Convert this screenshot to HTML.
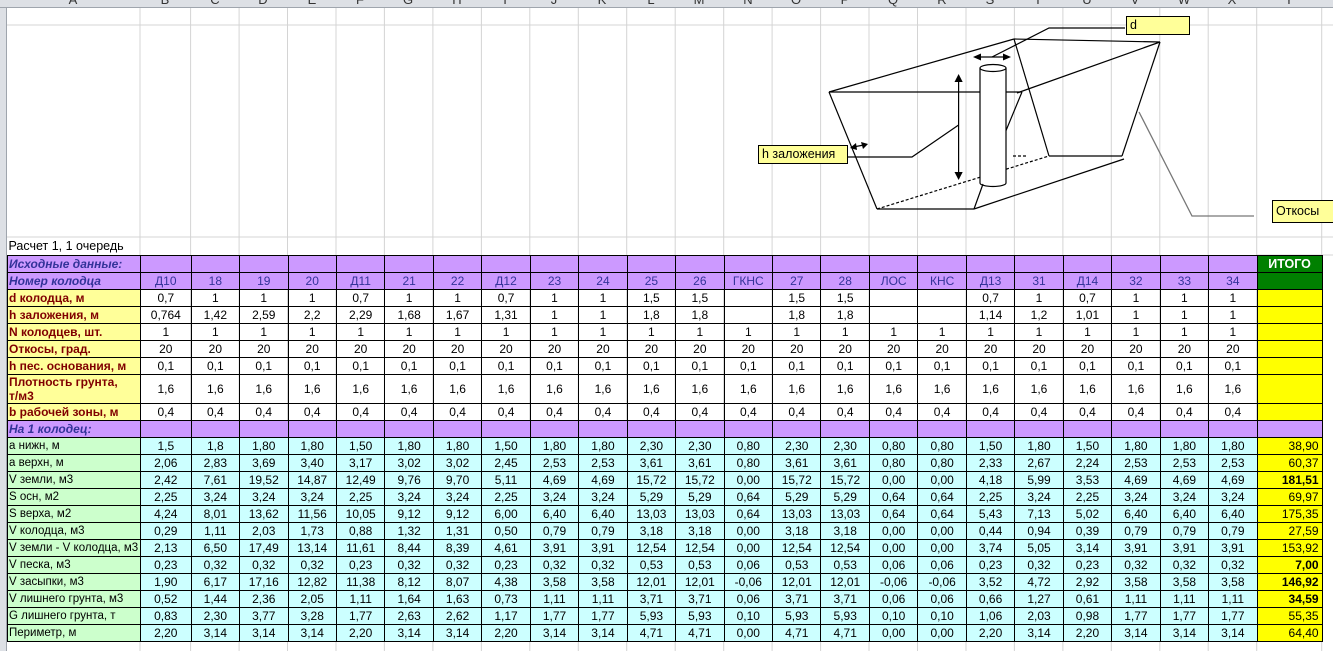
<!DOCTYPE html>
<html><head><meta charset="utf-8"><style>
*{margin:0;padding:0;box-sizing:border-box}
body{width:1333px;height:651px;overflow:hidden;background:#fff;position:relative;font-family:"Liberation Sans","DejaVu Sans",sans-serif}
#hdr{position:absolute;left:0;top:0;width:1333px;height:8px;background:#dde0e5;border-bottom:1px solid #9fa5ad;overflow:hidden}
#hdr span{position:absolute;top:-8px;font-size:13px;color:#333;transform:translateX(-50%)}
#rh{position:absolute;left:0;top:8px;width:7px;height:643px;background:#dde0e5;border-right:1px solid #9fa5ad}
#grid{position:absolute;left:0;top:0}
table{position:absolute;left:7px;top:237px;border-collapse:collapse;table-layout:fixed;width:1314.7px;font-size:12px}
td{border:1px solid #000;padding:0 1px;text-align:center;white-space:nowrap;overflow:hidden;height:17px;line-height:14px;color:#000}
tr.top td{border:none;height:18px;text-align:left;font-size:12.5px;padding-left:1px}
td.l{background:#ffff99;color:#800000;font-weight:bold;text-align:left;font-size:12px}
td.g{background:#ccffcc;text-align:left;font-size:11.5px}
tr.p td{background:#cc99ff;color:#333399}
tr.p td.h{font-weight:bold;font-style:italic;text-align:left}
td.itg{background:#008000 !important;color:#fff !important;font-weight:bold;font-size:12.5px}
td.y{background:#ffff00;text-align:right;padding-right:3px}
tr.c td{background:#ccffff}
tr.c td.g{background:#ccffcc}
tr.c td.y{background:#ffff00}
td.b{font-weight:bold}
.box{position:absolute;background:#ffff99;border:1px solid #000;font-size:12.5px;padding-left:3px;line-height:17px}
</style></head><body>
<svg id="grid" width="1333" height="651">
<g stroke="#d4d4d4" stroke-width="1">
<line x1="140" y1="8" x2="140" y2="651"/><line x1="190.6" y1="8" x2="190.6" y2="651"/><line x1="239.1" y1="8" x2="239.1" y2="651"/><line x1="287.5" y1="8" x2="287.5" y2="651"/><line x1="336" y1="8" x2="336" y2="651"/><line x1="384.4" y1="8" x2="384.4" y2="651"/><line x1="432.9" y1="8" x2="432.9" y2="651"/><line x1="481.4" y1="8" x2="481.4" y2="651"/><line x1="529.8" y1="8" x2="529.8" y2="651"/><line x1="578.3" y1="8" x2="578.3" y2="651"/><line x1="626.7" y1="8" x2="626.7" y2="651"/><line x1="675.2" y1="8" x2="675.2" y2="651"/><line x1="723.7" y1="8" x2="723.7" y2="651"/><line x1="772.1" y1="8" x2="772.1" y2="651"/><line x1="820.6" y1="8" x2="820.6" y2="651"/><line x1="869" y1="8" x2="869" y2="651"/><line x1="917.5" y1="8" x2="917.5" y2="651"/><line x1="966" y1="8" x2="966" y2="651"/><line x1="1014.4" y1="8" x2="1014.4" y2="651"/><line x1="1062.9" y1="8" x2="1062.9" y2="651"/><line x1="1111.3" y1="8" x2="1111.3" y2="651"/><line x1="1159.8" y1="8" x2="1159.8" y2="651"/><line x1="1208.2" y1="8" x2="1208.2" y2="651"/><line x1="1256.7" y1="8" x2="1256.7" y2="651"/><line x1="1321.7" y1="8" x2="1321.7" y2="651"/>
<line x1="7" y1="25" x2="1333" y2="25"/><line x1="7" y1="237" x2="1333" y2="237"/><line x1="1256" y1="255" x2="1333" y2="255"/>
</g>
<g stroke="#9fa5ad"><line x1="0" y1="25" x2="7" y2="25"/><line x1="0" y1="237" x2="7" y2="237"/></g>
</svg>
<div id="hdr">
<span style="left:73px">A</span><span style="left:165px">B</span><span style="left:215px">C</span><span style="left:263px">D</span><span style="left:312px">E</span><span style="left:360px">F</span><span style="left:408px">G</span><span style="left:457px">H</span><span style="left:505px">I</span><span style="left:554px">J</span><span style="left:602px">K</span><span style="left:651px">L</span><span style="left:699px">M</span><span style="left:748px">N</span><span style="left:796px">O</span><span style="left:845px">P</span><span style="left:893px">Q</span><span style="left:942px">R</span><span style="left:990px">S</span><span style="left:1038px">T</span><span style="left:1087px">U</span><span style="left:1135px">V</span><span style="left:1184px">W</span><span style="left:1232px">X</span><span style="left:1289px">Y</span>
</div>
<div id="rh"></div>

<svg style="position:absolute;left:0;top:0" width="1333" height="651">
<g stroke="#000" stroke-width="1.2" fill="none">
<line x1="829" y1="92" x2="1014" y2="39"/>
<line x1="1014" y1="39" x2="1160" y2="42"/>
<line x1="1160" y1="42" x2="1017" y2="93"/>
<line x1="829" y1="92" x2="1022" y2="92"/>
<line x1="1022" y1="92" x2="1005" y2="133"/>
<line x1="1014" y1="39" x2="1049" y2="156"/>
<line x1="1160" y1="42" x2="1122" y2="156"/>
<line x1="1049" y1="156" x2="1122" y2="156"/>
<line x1="829" y1="92" x2="877" y2="209"/>
<line x1="877" y1="209" x2="974" y2="209"/>
<line x1="974" y1="209" x2="1124" y2="159"/>
<line x1="974" y1="209" x2="983" y2="184"/>
<line x1="877" y1="209" x2="1049" y2="156" stroke-dasharray="3,2"/>
<line x1="1013" y1="156" x2="1026" y2="156" stroke-dasharray="3,2"/>
<rect x="980" y="68" width="26" height="115" fill="#fff" stroke="none"/>
<line x1="980" y1="68" x2="980" y2="183"/><line x1="1006" y1="68" x2="1006" y2="183"/>
<ellipse cx="993" cy="68" rx="13" ry="3.5" fill="#fff"/>
<path d="M980,183 A13,3.5 0 0 0 1006,183"/>
<line x1="958.6" y1="80" x2="958.6" y2="174"/>
<line x1="979" y1="57" x2="1005" y2="57"/>
<polyline points="1125,28 1049,28 992,57"/>
<polyline points="848,157 912,157 958.6,125"/>
<line x1="853" y1="147" x2="864" y2="145"/>
</g>
<g fill="#000">
<path d="M958.6,74 L954.5,82 L962.7,82 z"/><path d="M958.6,180 L954.5,172 L962.7,172 z"/>
<path d="M973,57 L981,53.5 L981,60.5 z"/><path d="M1011,57 L1003,53.5 L1003,60.5 z"/>
<path d="M850,148 L856,143 L857,150 z"/><path d="M868,144 L861,142 L863,149 z"/>
</g>
<polyline points="1139,112 1192,216 1254,216" stroke="#777" stroke-width="1.3" fill="none"/>
</svg>
<div class="box" style="left:1126px;top:16px;width:64px;height:19px">d</div>
<div class="box" style="left:758px;top:145px;width:90px;height:19px">h заложения</div>
<div class="box" style="left:1272px;top:200px;width:70px;height:23px;line-height:21px">Откосы</div>

<table>
<colgroup><col style="width:133px"><col style="width:50.6px"><col span="22" style="width:48.46px"><col style="width:65px"></colgroup>
<tr class="top"><td>Расчет 1, 1 очередь</td><td></td><td></td><td></td><td></td><td></td><td></td><td></td><td></td><td></td><td></td><td></td><td></td><td></td><td></td><td></td><td></td><td></td><td></td><td></td><td></td><td></td><td></td><td></td><td></td></tr>
<tr class="p"><td class="h">Исходные данные:</td><td></td><td></td><td></td><td></td><td></td><td></td><td></td><td></td><td></td><td></td><td></td><td></td><td></td><td></td><td></td><td></td><td></td><td></td><td></td><td></td><td></td><td></td><td></td><td class="itg">ИТОГО</td></tr>
<tr class="p"><td class="h">Номер колодца</td><td>Д10</td><td>18</td><td>19</td><td>20</td><td>Д11</td><td>21</td><td>22</td><td>Д12</td><td>23</td><td>24</td><td>25</td><td>26</td><td>ГКНС</td><td>27</td><td>28</td><td>ЛОС</td><td>КНС</td><td>Д13</td><td>31</td><td>Д14</td><td>32</td><td>33</td><td>34</td><td class="itg"></td></tr>
<tr><td class="l">d колодца, м</td><td>0,7</td><td>1</td><td>1</td><td>1</td><td>0,7</td><td>1</td><td>1</td><td>0,7</td><td>1</td><td>1</td><td>1,5</td><td>1,5</td><td></td><td>1,5</td><td>1,5</td><td></td><td></td><td>0,7</td><td>1</td><td>0,7</td><td>1</td><td>1</td><td>1</td><td class="y"></td></tr>
<tr><td class="l">h заложения, м</td><td>0,764</td><td>1,42</td><td>2,59</td><td>2,2</td><td>2,29</td><td>1,68</td><td>1,67</td><td>1,31</td><td>1</td><td>1</td><td>1,8</td><td>1,8</td><td></td><td>1,8</td><td>1,8</td><td></td><td></td><td>1,14</td><td>1,2</td><td>1,01</td><td>1</td><td>1</td><td>1</td><td class="y"></td></tr>
<tr><td class="l">N колодцев, шт.</td><td>1</td><td>1</td><td>1</td><td>1</td><td>1</td><td>1</td><td>1</td><td>1</td><td>1</td><td>1</td><td>1</td><td>1</td><td>1</td><td>1</td><td>1</td><td>1</td><td>1</td><td>1</td><td>1</td><td>1</td><td>1</td><td>1</td><td>1</td><td class="y"></td></tr>
<tr><td class="l">Откосы, град.</td><td>20</td><td>20</td><td>20</td><td>20</td><td>20</td><td>20</td><td>20</td><td>20</td><td>20</td><td>20</td><td>20</td><td>20</td><td>20</td><td>20</td><td>20</td><td>20</td><td>20</td><td>20</td><td>20</td><td>20</td><td>20</td><td>20</td><td>20</td><td class="y"></td></tr>
<tr><td class="l">h пес. основания, м</td><td>0,1</td><td>0,1</td><td>0,1</td><td>0,1</td><td>0,1</td><td>0,1</td><td>0,1</td><td>0,1</td><td>0,1</td><td>0,1</td><td>0,1</td><td>0,1</td><td>0,1</td><td>0,1</td><td>0,1</td><td>0,1</td><td>0,1</td><td>0,1</td><td>0,1</td><td>0,1</td><td>0,1</td><td>0,1</td><td>0,1</td><td class="y"></td></tr>
<tr style="height:29px"><td class="l" style="height:29px;line-height:14px;white-space:normal">Плотность грунта,<br>т/м3</td><td>1,6</td><td>1,6</td><td>1,6</td><td>1,6</td><td>1,6</td><td>1,6</td><td>1,6</td><td>1,6</td><td>1,6</td><td>1,6</td><td>1,6</td><td>1,6</td><td>1,6</td><td>1,6</td><td>1,6</td><td>1,6</td><td>1,6</td><td>1,6</td><td>1,6</td><td>1,6</td><td>1,6</td><td>1,6</td><td>1,6</td><td class="y"></td></tr>
<tr><td class="l">b рабочей зоны, м</td><td>0,4</td><td>0,4</td><td>0,4</td><td>0,4</td><td>0,4</td><td>0,4</td><td>0,4</td><td>0,4</td><td>0,4</td><td>0,4</td><td>0,4</td><td>0,4</td><td>0,4</td><td>0,4</td><td>0,4</td><td>0,4</td><td>0,4</td><td>0,4</td><td>0,4</td><td>0,4</td><td>0,4</td><td>0,4</td><td>0,4</td><td class="y"></td></tr>
<tr class="p"><td class="h">На 1 колодец:</td><td></td><td></td><td></td><td></td><td></td><td></td><td></td><td></td><td></td><td></td><td></td><td></td><td></td><td></td><td></td><td></td><td></td><td></td><td></td><td></td><td></td><td></td><td></td><td></td></tr>
<tr class="c"><td class="g">а нижн, м</td><td>1,5</td><td>1,8</td><td>1,80</td><td>1,80</td><td>1,50</td><td>1,80</td><td>1,80</td><td>1,50</td><td>1,80</td><td>1,80</td><td>2,30</td><td>2,30</td><td>0,80</td><td>2,30</td><td>2,30</td><td>0,80</td><td>0,80</td><td>1,50</td><td>1,80</td><td>1,50</td><td>1,80</td><td>1,80</td><td>1,80</td><td class="y">38,90</td></tr>
<tr class="c"><td class="g">а верхн, м</td><td>2,06</td><td>2,83</td><td>3,69</td><td>3,40</td><td>3,17</td><td>3,02</td><td>3,02</td><td>2,45</td><td>2,53</td><td>2,53</td><td>3,61</td><td>3,61</td><td>0,80</td><td>3,61</td><td>3,61</td><td>0,80</td><td>0,80</td><td>2,33</td><td>2,67</td><td>2,24</td><td>2,53</td><td>2,53</td><td>2,53</td><td class="y">60,37</td></tr>
<tr class="c"><td class="g">V земли, м3</td><td>2,42</td><td>7,61</td><td>19,52</td><td>14,87</td><td>12,49</td><td>9,76</td><td>9,70</td><td>5,11</td><td>4,69</td><td>4,69</td><td>15,72</td><td>15,72</td><td>0,00</td><td>15,72</td><td>15,72</td><td>0,00</td><td>0,00</td><td>4,18</td><td>5,99</td><td>3,53</td><td>4,69</td><td>4,69</td><td>4,69</td><td class="y b">181,51</td></tr>
<tr class="c"><td class="g">S осн, м2</td><td>2,25</td><td>3,24</td><td>3,24</td><td>3,24</td><td>2,25</td><td>3,24</td><td>3,24</td><td>2,25</td><td>3,24</td><td>3,24</td><td>5,29</td><td>5,29</td><td>0,64</td><td>5,29</td><td>5,29</td><td>0,64</td><td>0,64</td><td>2,25</td><td>3,24</td><td>2,25</td><td>3,24</td><td>3,24</td><td>3,24</td><td class="y">69,97</td></tr>
<tr class="c"><td class="g">S верха, м2</td><td>4,24</td><td>8,01</td><td>13,62</td><td>11,56</td><td>10,05</td><td>9,12</td><td>9,12</td><td>6,00</td><td>6,40</td><td>6,40</td><td>13,03</td><td>13,03</td><td>0,64</td><td>13,03</td><td>13,03</td><td>0,64</td><td>0,64</td><td>5,43</td><td>7,13</td><td>5,02</td><td>6,40</td><td>6,40</td><td>6,40</td><td class="y">175,35</td></tr>
<tr class="c"><td class="g">V колодца, м3</td><td>0,29</td><td>1,11</td><td>2,03</td><td>1,73</td><td>0,88</td><td>1,32</td><td>1,31</td><td>0,50</td><td>0,79</td><td>0,79</td><td>3,18</td><td>3,18</td><td>0,00</td><td>3,18</td><td>3,18</td><td>0,00</td><td>0,00</td><td>0,44</td><td>0,94</td><td>0,39</td><td>0,79</td><td>0,79</td><td>0,79</td><td class="y">27,59</td></tr>
<tr class="c"><td class="g">V земли - V колодца, м3</td><td>2,13</td><td>6,50</td><td>17,49</td><td>13,14</td><td>11,61</td><td>8,44</td><td>8,39</td><td>4,61</td><td>3,91</td><td>3,91</td><td>12,54</td><td>12,54</td><td>0,00</td><td>12,54</td><td>12,54</td><td>0,00</td><td>0,00</td><td>3,74</td><td>5,05</td><td>3,14</td><td>3,91</td><td>3,91</td><td>3,91</td><td class="y">153,92</td></tr>
<tr class="c"><td class="g">V песка, м3</td><td>0,23</td><td>0,32</td><td>0,32</td><td>0,32</td><td>0,23</td><td>0,32</td><td>0,32</td><td>0,23</td><td>0,32</td><td>0,32</td><td>0,53</td><td>0,53</td><td>0,06</td><td>0,53</td><td>0,53</td><td>0,06</td><td>0,06</td><td>0,23</td><td>0,32</td><td>0,23</td><td>0,32</td><td>0,32</td><td>0,32</td><td class="y b">7,00</td></tr>
<tr class="c"><td class="g">V засыпки, м3</td><td>1,90</td><td>6,17</td><td>17,16</td><td>12,82</td><td>11,38</td><td>8,12</td><td>8,07</td><td>4,38</td><td>3,58</td><td>3,58</td><td>12,01</td><td>12,01</td><td>-0,06</td><td>12,01</td><td>12,01</td><td>-0,06</td><td>-0,06</td><td>3,52</td><td>4,72</td><td>2,92</td><td>3,58</td><td>3,58</td><td>3,58</td><td class="y b">146,92</td></tr>
<tr class="c"><td class="g">V лишнего грунта, м3</td><td>0,52</td><td>1,44</td><td>2,36</td><td>2,05</td><td>1,11</td><td>1,64</td><td>1,63</td><td>0,73</td><td>1,11</td><td>1,11</td><td>3,71</td><td>3,71</td><td>0,06</td><td>3,71</td><td>3,71</td><td>0,06</td><td>0,06</td><td>0,66</td><td>1,27</td><td>0,61</td><td>1,11</td><td>1,11</td><td>1,11</td><td class="y b">34,59</td></tr>
<tr class="c"><td class="g">G лишнего грунта, т</td><td>0,83</td><td>2,30</td><td>3,77</td><td>3,28</td><td>1,77</td><td>2,63</td><td>2,62</td><td>1,17</td><td>1,77</td><td>1,77</td><td>5,93</td><td>5,93</td><td>0,10</td><td>5,93</td><td>5,93</td><td>0,10</td><td>0,10</td><td>1,06</td><td>2,03</td><td>0,98</td><td>1,77</td><td>1,77</td><td>1,77</td><td class="y">55,35</td></tr>
<tr class="c"><td class="g">Периметр, м</td><td>2,20</td><td>3,14</td><td>3,14</td><td>3,14</td><td>2,20</td><td>3,14</td><td>3,14</td><td>2,20</td><td>3,14</td><td>3,14</td><td>4,71</td><td>4,71</td><td>0,00</td><td>4,71</td><td>4,71</td><td>0,00</td><td>0,00</td><td>2,20</td><td>3,14</td><td>2,20</td><td>3,14</td><td>3,14</td><td>3,14</td><td class="y">64,40</td></tr>
</table>
</body></html>
